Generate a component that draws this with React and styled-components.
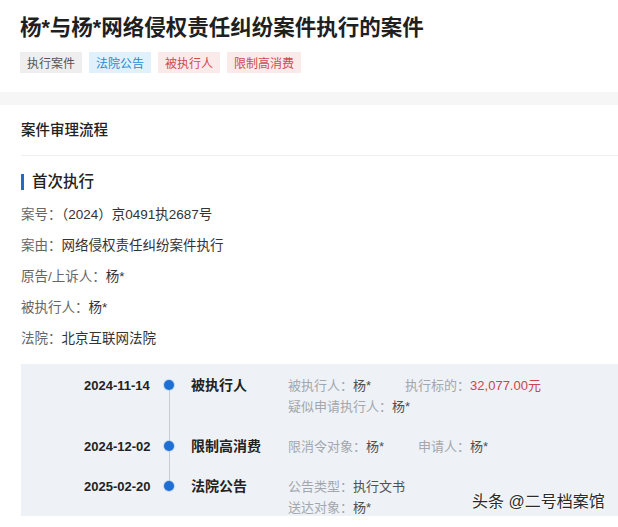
import React from "react";
import styled, { createGlobalStyle } from "styled-components";

const GlobalStyle = createGlobalStyle`
  body {
    margin: 0;
    background: #ffffff;
    font-family: "Liberation Sans", "Noto Sans CJK SC", sans-serif;
    color: #222;
  }
`;

const Page = styled.div`
  position: relative;
  display: flex;
  flex-direction: column;
  width: 618px;
  height: 527px;
  overflow: hidden;
  background: #f6f6f7;
`;

const TopCard = styled.div`
  background: #fff;
  padding: 14px 20px 19px 20px;
`;

const Title = styled.h1`
  margin: 0;
  font-size: 21.5px;
  line-height: 28px;
  font-weight: 700;
  color: #1f1f1f;
  white-space: nowrap;
`;

const TagRow = styled.div`
  display: flex;
  gap: 7px;
  margin-top: 10px;
`;

const tagColors = {
  gray: { bg: "#eeeeee", fg: "#555555" },
  blue: { bg: "#e1f1fb", fg: "#2b8ad0" },
  red: { bg: "#fbeaea", fg: "#cf4a50" },
};

const Tag = styled.span`
  display: inline-flex;
  align-items: center;
  height: 21px;
  padding: 0 7px;
  font-size: 12px;
  background: ${(p) => tagColors[p.$tone].bg};
  color: ${(p) => tagColors[p.$tone].fg};
`;

const FlowCard = styled.div`
  flex: 1;
  background: #fff;
  margin-top: 13px;
  padding-left: 21px;
`;

const CardHeader = styled.div`
  height: 50px;
  line-height: 50px;
  font-size: 14.5px;
  font-weight: 500;
  color: #222;
  border-bottom: 1px solid #efefef;
`;

const SectionTitle = styled.div`
  display: flex;
  align-items: center;
  gap: 8px;
  margin-top: 15px;
  font-size: 15.5px;
  line-height: 22px;
  font-weight: 500;
  color: #222;

  &::before {
    content: "";
    width: 3px;
    height: 16px;
    background: #1f6fc0;
  }
`;

const Fields = styled.div`
  margin-top: 6px;
`;

const Field = styled.div`
  font-size: 13.5px;
  line-height: 31px;
  color: #333;
`;

const FieldLabel = styled.span`
  color: #666;
`;

const Timeline = styled.div`
  margin-top: 10px;
  background: #eef2f7;
  padding: 11px 0 0 63px;
  height: 141px;
  overflow: visible;
`;

const Row = styled.div`
  display: flex;
  padding-bottom: ${(p) => (p.$last ? 0 : 19)}px;
`;

const DateCol = styled.div`
  width: 80px;
  font-size: 13px;
  line-height: 21px;
  font-weight: 700;
  color: #222;
`;

const Axis = styled.div`
  width: 10px;
  display: flex;
  flex-direction: column;
  align-items: center;
  margin-bottom: ${(p) => (p.$last ? 0 : -19)}px;
`;

const AxisLine = styled.div`
  width: 1px;
  background: ${(p) => (p.$hidden ? "transparent" : "#c9cdd3")};
  height: ${(p) => (p.$fixed ? `${p.$fixed}px` : "auto")};
  flex: ${(p) => (p.$fixed ? "none" : 1)};
`;

const Dot = styled.div`
  width: 10px;
  height: 10px;
  border-radius: 50%;
  background: #1e6fd3;
  box-shadow: 0 0 0 1px rgba(30, 111, 211, 0.2);
  flex: none;
`;

const EventTitle = styled.div`
  width: 97px;
  margin-left: 17px;
  font-size: 14px;
  line-height: 21px;
  font-weight: 700;
  color: #222;
  white-space: nowrap;
`;

const Details = styled.div`
  font-size: 13px;
  line-height: 21px;
  color: #a3a7ad;
`;

const DetailLine = styled.div`
  display: flex;
  white-space: nowrap;
`;

const Item = styled.span`
  margin-right: 34px;
`;

const Value = styled.span`
  color: ${(p) => (p.$red ? "#c9464a" : "#505050")};
`;

const Watermark = styled.div`
  position: absolute;
  left: 472px;
  top: 492px;
  font-size: 16px;
  line-height: 20px;
  color: #2a2a2a;
  text-shadow: 0 0 2px #fff, 0 0 2px #fff;
  white-space: nowrap;
`;

const tags = [
  { text: "执行案件", tone: "gray" },
  { text: "法院公告", tone: "blue" },
  { text: "被执行人", tone: "red" },
  { text: "限制高消费", tone: "red" },
];

const fields = [
  ["案号：", "（2024）京0491执2687号"],
  ["案由：", "网络侵权责任纠纷案件执行"],
  ["原告/上诉人：", "杨*"],
  ["被执行人：", "杨*"],
  ["法院：", "北京互联网法院"],
];

const events = [
  {
    date: "2024-11-14",
    title: "被执行人",
    lines: [
      [["被执行人：", "杨*"], ["执行标的：", "32,077.00元", true]],
      [["疑似申请执行人：", "杨*"]],
    ],
  },
  {
    date: "2024-12-02",
    title: "限制高消费",
    lines: [[["限消令对象：", "杨*"], ["申请人：", "杨*"]]],
  },
  {
    date: "2025-02-20",
    title: "法院公告",
    lines: [[["公告类型：", "执行文书"]], [["送达对象：", "杨*"]]],
  },
];

export default function App() {
  return (
    <Page>
      <GlobalStyle />
      <TopCard>
        <Title>杨*与杨*网络侵权责任纠纷案件执行的案件</Title>
        <TagRow>
          {tags.map((t) => (
            <Tag key={t.text} $tone={t.tone}>
              {t.text}
            </Tag>
          ))}
        </TagRow>
      </TopCard>

      <FlowCard>
        <CardHeader>案件审理流程</CardHeader>
        <SectionTitle>首次执行</SectionTitle>
        <Fields>
          {fields.map(([label, value]) => (
            <Field key={label}>
              <FieldLabel>{label}</FieldLabel>
              {value}
            </Field>
          ))}
        </Fields>

        <Timeline>
          {events.map((ev, i) => {
            const first = i === 0;
            const last = i === events.length - 1;
            return (
              <Row key={ev.date} $last={last}>
                <DateCol>{ev.date}</DateCol>
                <Axis $last={last}>
                  <AxisLine $fixed={5} $hidden={first} />
                  <Dot />
                  <AxisLine $hidden={last} />
                </Axis>
                <EventTitle>{ev.title}</EventTitle>
                <Details>
                  {ev.lines.map((line, j) => (
                    <DetailLine key={j}>
                      {line.map(([label, value, red]) => (
                        <Item key={label}>
                          {label}
                          <Value $red={red}>{value}</Value>
                        </Item>
                      ))}
                    </DetailLine>
                  ))}
                </Details>
              </Row>
            );
          })}
        </Timeline>
      </FlowCard>

      <Watermark>头条 @二号档案馆</Watermark>
    </Page>
  );
}
